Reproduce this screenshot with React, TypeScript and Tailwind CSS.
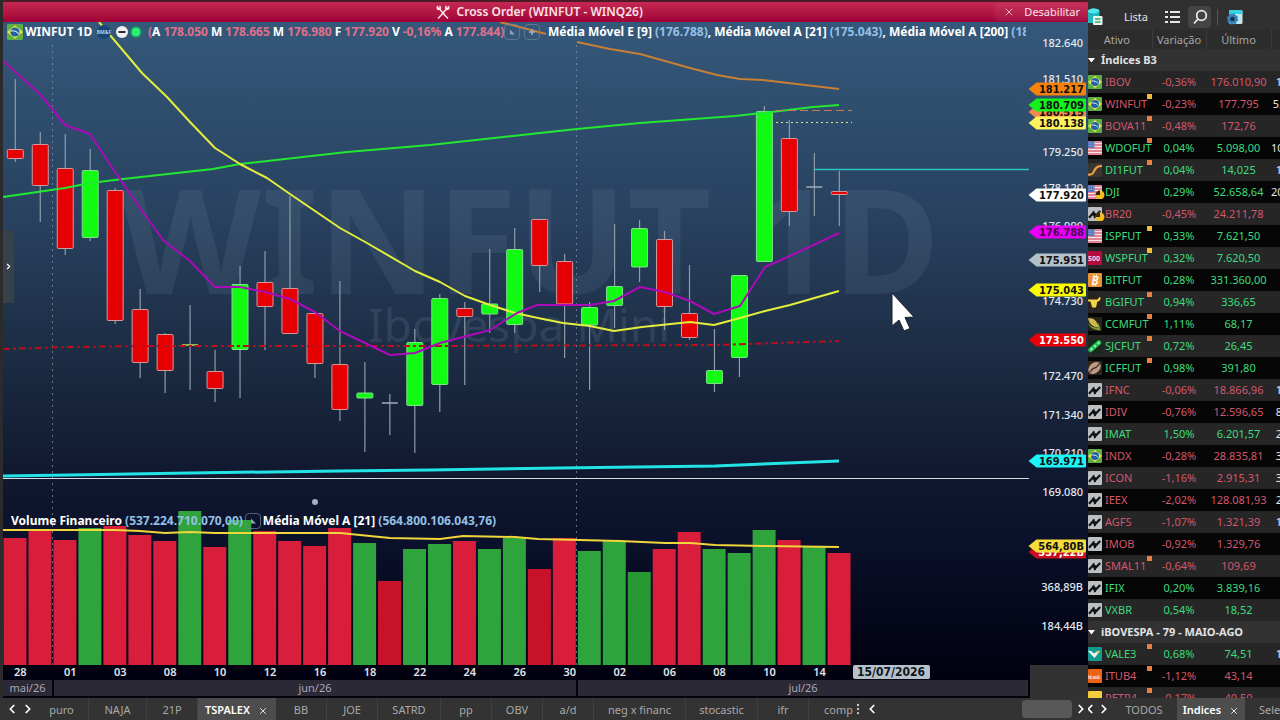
import React, { useState } from 'react';
import { ChevronLeft, ChevronRight, MoreVertical, X } from 'lucide-react';

// --- Types ---

type Color = 'up' | 'down' | 'doji';
// [bodyTop, bodyBottom, high, low, color]
type Candle = [number, number, number, number, Color];

interface Quote {
  symbol: string;
  icon: string;
  change: string;
  last: string;
  next?: string;
  dot?: 'yellow' | 'orange';
}

interface Tag {
  y: number;
  label: string;
  fill: string;
  text?: string;
}

// --- Chart data ---

const STEP = 24.97;
const candleX = (i: number) => 15.3 + i * STEP;

const CANDLES: Candle[] = [
  [149.5, 158.5, 79, 162, 'down'],
  [144.5, 185.5, 132, 222, 'down'],
  [168.5, 248.5, 134, 255, 'down'],
  [170.5, 237.5, 149, 241, 'up'],
  [190.5, 320.5, 188, 324, 'down'],
  [309.5, 362.5, 289, 378, 'down'],
  [334.5, 370.5, 333, 393, 'down'],
  [344, 346, 305, 390, 'doji'],
  [371.5, 388.5, 350, 402, 'down'],
  [284.5, 349.5, 266, 398, 'up'],
  [282.5, 306.5, 251, 350, 'down'],
  [288.5, 333.5, 196, 333, 'down'],
  [313.5, 363.5, 313, 378, 'down'],
  [364.5, 409.5, 281, 421, 'down'],
  [393, 398, 362, 452, 'up'],
  [402, 404, 394, 435, 'doji'],
  [342.5, 405.5, 329, 453, 'up'],
  [298.5, 384.5, 294, 412, 'up'],
  [308.5, 316.5, 302, 385, 'down'],
  [304, 314, 249, 333, 'up'],
  [249.5, 324.5, 228, 333, 'up'],
  [219.5, 265.5, 219, 292, 'down'],
  [261.5, 304, 254, 358, 'down'],
  [307.5, 325, 302, 390, 'up'],
  [286.5, 305.5, 224, 328, 'up'],
  [228.5, 267, 220, 282, 'up'],
  [239.5, 306.5, 231, 330, 'down'],
  [313.5, 337.5, 265, 340, 'down'],
  [370.5, 383.5, 329, 392, 'up'],
  [275.5, 357.5, 275, 377, 'up'],
  [111.5, 261.5, 106, 261, 'up'],
  [138.5, 211.5, 120, 226, 'down'],
  [186, 188, 153, 216, 'doji'],
  [191.5, 194.5, 171, 226, 'down'],
];

const VOLUMES: [number, Color][] = [
  [538, 'down'], [530, 'down'], [540, 'down'], [528, 'up'], [526, 'down'], [535, 'down'], [541, 'down'],
  [511, 'up'], [547, 'down'], [520, 'up'], [531, 'down'], [541, 'down'], [546, 'down'], [528, 'down'],
  [543, 'up'], [581, 'down'], [549, 'up'], [544, 'up'], [541, 'down'], [549, 'up'], [538, 'up'],
  [569, 'down'], [538, 'down'], [551, 'up'], [541, 'up'], [572, 'up'], [549, 'down'], [532, 'down'],
  [549, 'up'], [553, 'up'], [530, 'up'], [540, 'down'], [546, 'up'], [553, 'down'],
];

const LINES = [
  { color: '#c77f35', width: 2, points: '500,22 546,34' },
  { color: '#c77f35', width: 2, points: '577,42 610,49 640,54 665,61 690,68 717,75 740,79 763,80 839,89' },
  { color: '#22e832', width: 2, points: '3,197 65,188 90,183 123,179 213,169 240,164 347,152 430,145 513,136 540,133 577,129 640,123 735,116 780,111 813,107 839,105' },
  { color: '#22e4e6', width: 3, points: '3,476 70,475 190,473 340,471 430,470 560,468 715,466 839,461' },
  { color: '#e4ee3c', width: 2, points: '99,22 142,73 167,97 190,122 215,148 240,164 267,178 290,194 340,228 367,243 415,271 440,282 465,296 490,305 515,313 538,318 563,323 590,326 614,331 642,327 690,322 714,325 740,318 765,311 790,305 839,291' },
  { color: '#a90bb9', width: 2, points: '3,61 40,94 65,125 90,134 115,172 140,208 163,240 190,261 215,287 240,287 265,292 290,299 315,312 340,331 390,355 415,353 440,343 490,330 517,313 537,305 590,305 614,301 640,287 665,292 690,301 714,314 740,306 765,267 790,256 839,233' },
];

const VOLUME_AVERAGE = '3,530 115,530 140,531 165,533 190,532 215,533 340,533 390,538 440,539 463,536 515,537 538,539 620,541 665,543 690,543 715,545 765,546 839,547';

const PRICES = [
  { y: 43, label: '182.640' },
  { y: 79, label: '181.510' },
  { y: 152, label: '179.250' },
  { y: 188, label: '178.120' },
  { y: 226, label: '176.990' },
  { y: 301, label: '174.730' },
  { y: 376, label: '172.470' },
  { y: 415, label: '171.340' },
  { y: 453, label: '170.210' },
  { y: 492, label: '169.080' },
  { y: 587, label: '368,89B' },
  { y: 626, label: '184,44B' },
];

const TAGS: Tag[] = [
  { y: 89, label: '181.217', fill: '#f5820a' },
  { y: 112, label: '180.515', fill: '#f28a4a' },
  { y: 105, label: '180.709', fill: '#12f31c' },
  { y: 123, label: '180.138', fill: '#fdf35c' },
  { y: 195, label: '177.920', fill: '#ffffff' },
  { y: 232, label: '176.788', fill: '#e800f5', text: '#4d0055' },
  { y: 260, label: '175.951', fill: '#b4c1cb' },
  { y: 290, label: '175.043', fill: '#fbfb00' },
  { y: 340, label: '173.550', fill: '#e80008', text: '#ffffff' },
  { y: 461, label: '169.971', fill: '#1cf4f7' },
  { y: 552, label: '537,22B', fill: '#c8101e', text: '#ffffff' },
  { y: 546, label: '564,80B', fill: '#f7dc3b' },
];

const DAYS = ['28', '01', '03', '08', '10', '12', '16', '18', '22', '24', '26', '30', '02', '06', '08', '10', '14'];

// --- Watchlist data ---

const INDICES: Quote[] = [
  { symbol: 'IBOV', icon: 'br', change: '-0,36%', last: '176.010,90', next: '1' },
  { symbol: 'WINFUT', icon: 'br', change: '-0,23%', last: '177.795', next: '5.', dot: 'yellow' },
  { symbol: 'BOVA11', icon: 'br', change: '-0,48%', last: '172,76', dot: 'orange' },
  { symbol: 'WDOFUT', icon: 'us', change: '0,04%', last: '5.098,00', next: '10', dot: 'orange' },
  { symbol: 'DI1FUT', icon: 'curve', change: '0,04%', last: '14,025', next: '1', dot: 'orange' },
  { symbol: 'DJI', icon: 'us-clock', change: '0,29%', last: '52.658,64', next: '20' },
  { symbol: 'BR20', icon: 'index-clock', change: '-0,45%', last: '24.211,78' },
  { symbol: 'ISPFUT', icon: 'us', change: '0,33%', last: '7.621,50', dot: 'yellow' },
  { symbol: 'WSPFUT', icon: '500', change: '0,32%', last: '7.620,50', dot: 'yellow' },
  { symbol: 'BITFUT', icon: 'btc', change: '0,28%', last: '331.360,00' },
  { symbol: 'BGIFUT', icon: 'bull', change: '0,94%', last: '336,65', dot: 'orange' },
  { symbol: 'CCMFUT', icon: 'corn', change: '1,11%', last: '68,17', dot: 'orange' },
  { symbol: 'SJCFUT', icon: 'soy', change: '0,72%', last: '26,45', dot: 'orange' },
  { symbol: 'ICFFUT', icon: 'coffee', change: '0,98%', last: '391,80', dot: 'orange' },
  { symbol: 'IFNC', icon: 'index', change: '-0,06%', last: '18.866,96', next: '1' },
  { symbol: 'IDIV', icon: 'index', change: '-0,76%', last: '12.596,65', next: '8' },
  { symbol: 'IMAT', icon: 'index', change: '1,50%', last: '6.201,57', next: '2' },
  { symbol: 'INDX', icon: 'br', change: '-0,28%', last: '28.835,81', next: '3' },
  { symbol: 'ICON', icon: 'index', change: '-1,16%', last: '2.915,31', next: '3' },
  { symbol: 'IEEX', icon: 'index', change: '-2,02%', last: '128.081,93', next: '2' },
  { symbol: 'AGFS', icon: 'index', change: '-1,07%', last: '1.321,39', next: '1' },
  { symbol: 'IMOB', icon: 'index', change: '-0,92%', last: '1.329,76' },
  { symbol: 'SMAL11', icon: 'index', change: '-0,64%', last: '109,69', dot: 'orange' },
  { symbol: 'IFIX', icon: 'index', change: '0,20%', last: '3.839,16' },
  { symbol: 'VXBR', icon: 'index', change: '0,54%', last: '18,52' },
];

const IBOVESPA: Quote[] = [
  { symbol: 'VALE3', icon: 'vale', change: '0,68%', last: '74,51', next: '1', dot: 'orange' },
  { symbol: 'ITUB4', icon: 'itau', change: '-1,12%', last: '43,14', dot: 'orange' },
  { symbol: 'PETR4', icon: 'petr', change: '-0,17%', last: '40,50', dot: 'orange' },
];

const CHART_TABS = [
  { name: 'puro', width: 'w-[54px]' },
  { name: 'NAJA', width: 'w-[58px]' },
  { name: '21P', width: 'w-[51px]' },
  { name: 'TSPALEX', width: 'w-[78px]' },
  { name: 'BB', width: 'w-[51px]' },
  { name: 'JOE', width: 'w-[51px]' },
  { name: 'SATRD', width: 'w-[63px]' },
  { name: 'pp', width: 'w-[51px]' },
  { name: 'OBV', width: 'w-[51px]' },
  { name: 'a/d', width: 'w-[51px]' },
  { name: 'neg x financ', width: 'w-[92px]' },
  { name: 'stocastic', width: 'w-[72px]' },
  { name: 'ifr', width: 'w-[51px]' },
];

// --- Icons ---

const BrazilFlag = () => (
  <>
    <rect width="14" height="14" rx="1" fill="#5cae45" />
    <path d="M7 1 14 7 7 13 0 7Z" fill="#e9e24a" />
    <circle cx="7" cy="7" r="4" fill="#1f62a8" />
    <path d="M3.4 6.200c2.400-.8 5 .1 6.900 2.200" stroke="#dcecf4" strokeWidth="1" fill="none" />
  </>
);

const UsFlag = () => (
  <>
    <rect width="14" height="14" rx="1" fill="#f1e4ea" />
    <path d="M0 1h14M0 4h14M0 7h14M0 10h14M0 13h14" stroke="#dd6478" strokeWidth="1.400" />
    <rect width="6.500" height="7" fill="#5b78b8" />
    <path d="M1 2h5M1 4.500h5" stroke="#a9bbe0" strokeWidth=".7" strokeDasharray="1 1" />
  </>
);

const IndexMark = () => (
  <>
    <rect width="14" height="14" rx="1" fill="#bcc0c3" />
    <path d="M1 10.800 5.600 5.600 6.800 9.600 12.200 4" stroke="#101214" strokeWidth="2.200" fill="none" />
    <path d="M5.200 4.500v4.500M7.300 6v5" stroke="#101214" strokeWidth="1" />
  </>
);

const ClockBadge = () => (
  <>
    <circle cx="12" cy="10" r="4.500" fill="#f3bd24" />
    <path d="M12 10V5.500a4.500 4.500 0 0 0-4.500 4.500Z" fill="#2b2618" />
  </>
);

const AssetIcon: React.FC<{ name: string }> = ({ name }) => (
  <svg viewBox="0 0 17 14" className="h-[14px] w-[17px] shrink-0" aria-hidden="true">
    {name === 'br' && <BrazilFlag />}
    {name.startsWith('us') && <UsFlag />}
    {name.startsWith('index') && <IndexMark />}
    {name.endsWith('clock') && <ClockBadge />}
    {name === 'curve' && (
      <>
        <rect width="14" height="14" rx="1" fill="#3b3632" />
        <path d="M0 11.500c6 .5 5-2.500 7-5s3-3.500 7-3.500" stroke="#f0a040" strokeWidth="2.200" fill="none" />
      </>
    )}
    {name === '500' && (
      <>
        <rect width="14" height="14" rx="1" fill="#b50c3c" />
        <text x="6" y="9.500" fontSize="7" fontWeight="bold" fill="#f6dbe2" textAnchor="middle">500</text>
      </>
    )}
    {name === 'btc' && (
      <>
        <rect width="14" height="14" rx="1" fill="#e8923a" />
        <text x="7" y="11.500" fontSize="12" fontWeight="bold" fontStyle="italic" fill="#fff4e4" textAnchor="middle">B</text>
        <path d="M6 1.500v2M8.500 1.500v2M5 11v2M7.500 11v2" stroke="#fff4e4" strokeWidth="1" />
      </>
    )}
    {name === 'bull' && (
      <>
        <rect width="14" height="14" rx="1" fill="#28241c" />
        <path d="M0 4.500h9.500L11.500 2l1 .300c.3 2.700-.7 4-3.200 4.500L8 12.500H4.200L2.500 6.800 0 6.300Z" fill="#f6d34a" />
      </>
    )}
    {name === 'corn' && (
      <>
        <rect width="14" height="14" rx="1" fill="#23251a" />
        <path d="M0 1.500c5-1 9 2 10.500 8.500C5 10.500 1.500 7 0 1.500Z" fill="#d9c55a" />
        <path d="m1 2.500 8 7M3.500 2.500l6 5M1 5l6 5" stroke="#8b7a30" strokeWidth=".8" strokeDasharray="1 1" />
        <path d="M0 6c2 5 6 7 12.500 7.500C12 10 11.500 8 9.500 5c.3 2.800.3 4 .5 5.500C6 11 3 9.500 0 6Z" fill="#7c9a3c" />
      </>
    )}
    {name === 'soy' && (
      <>
        <rect width="14" height="14" rx="1" fill="#152b1b" />
        <path d="m2.500 11 8.500-7.500" stroke="#20b552" strokeWidth="4.500" strokeLinecap="round" />
        <circle cx="3.500" cy="10" r="1.500" fill="#7df0a0" />
        <circle cx="7" cy="7" r="1.500" fill="#7df0a0" />
        <circle cx="10.500" cy="4" r="1.500" fill="#7df0a0" />
      </>
    )}
    {name === 'coffee' && (
      <>
        <rect width="14" height="14" rx="1" fill="#30251f" />
        <ellipse cx="6.500" cy="7" rx="7" ry="5" transform="rotate(-42 6.500 7)" fill="#bf9a84" />
        <path d="M1.500 11.500C4 9 4 7.500 6.500 7S9.500 5 11.500 2.500" stroke="#4d3428" strokeWidth="1.300" fill="none" />
      </>
    )}
    {name === 'vale' && (
      <>
        <rect width="14" height="14" rx="1" fill="#159a91" />
        <path d="M0 4c3-1 4.500 1.500 6 2.500C8 5 9 3.500 12 4L6.500 11Z" fill="#f2faf3" />
        <path d="M8 5.500C9 4.500 10 3.500 12 4L9.500 7.200Z" fill="#e8cf5b" />
      </>
    )}
    {name === 'itau' && (
      <>
        <rect width="14" height="14" rx="1" fill="#ec6413" />
        <text x="6" y="9.500" fontSize="6" fontWeight="bold" fill="#ffe9d6" textAnchor="middle">itaú</text>
      </>
    )}
    {name === 'petr' && (
      <>
        <rect width="14" height="14" rx="1" fill="#f2cd3d" />
        <path d="M1 9h12" stroke="#fff" strokeWidth="4" />
        <path d="M2 9h10" stroke="#3c8a55" strokeWidth="2" strokeDasharray="2 1" />
      </>
    )}
  </svg>
);

const CrossedTools = () => (
  <svg viewBox="0 0 14 14" className="h-[14px] w-[14px]" aria-hidden="true" fill="none" stroke="#fbe3ea" strokeWidth="1.500">
    <path d="M2 13.500 7 8.300l5 5.200M3.500 4 8.500 9.500M10.500 4 5.500 9.500" />
    <circle cx="2.800" cy="2.800" r="2.400" fill="#fbe3ea" stroke="none" />
    <circle cx="11.200" cy="2.800" r="2.400" fill="#fbe3ea" stroke="none" />
    <path d="M2.800 0v2.400M11.200 0v2.400" stroke="#bb2450" strokeWidth="1.200" />
  </svg>
);

const LegendButton: React.FC<{ label: string; plus?: boolean }> = ({ label, plus }) => (
  <button aria-label={label} className="flex h-[16px] w-[16px] shrink-0 items-center justify-center rounded border border-[#71859c]/70">
    <svg viewBox="0 0 8 8" className="h-2 w-2" aria-hidden="true">
      {plus ? <path d="M4 1v6M1 4h6" stroke="#a3b3c4" strokeWidth="1.500" /> : <path d="M2 1.500v5h5Z" fill="#8fa2b6" />}
    </svg>
  </button>
);

// --- Chart ---

const PriceTag: React.FC<Tag> = ({ y, label, fill, text = '#101010' }) => (
  <g>
    <path d={`M1028.500 ${y}l8-6.500h48.500a1 1 0 0 1 1 1v11a1 1 0 0 1-1 1h-48.500Z`} fill={fill} />
    <text x="1084" y={y + 4} textAnchor="end" fontSize="11" fontWeight="bold" fill={text} fontFamily="'DejaVu Sans Condensed', 'DejaVu Sans', sans-serif">{label}</text>
  </g>
);

const CandleShape: React.FC<{ candle: Candle; x: number }> = ({ candle, x }) => {
  const [top, bottom, high, low, color] = candle;
  return (
    <g>
      <path d={`M${x} ${high}V${low}`} stroke="#8f9ca9" strokeWidth="1.200" />
      {color === 'doji' ? (
        <path d={`M${x - 8} ${(top + bottom) / 2}h16`} stroke="#a3adb6" strokeWidth="1.500" />
      ) : (
        <rect
          x={x - 8}
          y={top}
          width="16"
          height={bottom - top}
          rx="1"
          fill={color === 'up' ? '#12fb12' : '#e60004'}
          stroke={color === 'up' ? '#7fe08a' : '#cf9a9e'}
          strokeWidth="1"
        />
      )}
    </g>
  );
};

const volumeFill = (top: number, color: Color) => {
  if (top > 565) return color === 'up' ? '#269934' : '#c8122c';
  return color === 'up' ? '#2fa33c' : '#d81e3b';
};

const PriceChart = () => (
  <svg
    viewBox="3 22 1085 658"
    preserveAspectRatio="none"
    className="block h-full w-full"
    role="img"
    aria-label="WINFUT 1D"
    fontFamily="'Noto Sans', sans-serif"
  >
    <defs>
      <linearGradient id="sky" x1="0" y1="0" x2="0" y2="1">
        <stop offset="0" stopColor="#35587a" />
        <stop offset="0.3" stopColor="#28415f" />
        <stop offset="0.52" stopColor="#1b2b42" />
        <stop offset="0.7" stopColor="#10172f" />
        <stop offset="0.8" stopColor="#0a1029" />
        <stop offset="1" stopColor="#00000f" />
      </linearGradient>
    </defs>
    <rect x="3" y="22" width="1085" height="658" fill="url(#sky)" />

    <text x="120" y="294" fontSize="146" fontWeight="bold" fill="#8fa5b8" fillOpacity="0.12">WINFUT 1D</text>
    <text x="368" y="342" fontSize="46" fill="#8fa5b8" fillOpacity="0.17">Ibovespa Mini</text>

    {VOLUMES.map(([top, color], i) => (
      <rect key={i} x={3.5 + i * STEP} y={top} width="23" height={665 - top} fill={volumeFill(top, color)} />
    ))}
    <path d="M52.500 45V665M576.500 45V665" stroke="#8494a8" strokeOpacity="0.7" strokeDasharray="2 4" />

    {CANDLES.map((candle, i) => (
      <CandleShape key={i} candle={candle} x={candleX(i)} />
    ))}
    <path d="M182 345H198" stroke="#a8b83c" strokeWidth="1.500" />
    <path d="M3 349 70 347 140 346 430 346 715 345 839 341" stroke="#bd0a1c" strokeWidth="2" strokeDasharray="7 3 3 3" fill="none" />
    {LINES.map((line) => (
      <polyline key={line.points} points={line.points} stroke={line.color} strokeWidth={line.width} strokeLinejoin="round" fill="none" />
    ))}
    <polyline points={VOLUME_AVERAGE} stroke="#f0d63a" strokeWidth="2" fill="none" />
    <path d="M3 478.500H1029" stroke="#d5d9e0" strokeWidth="1" />
    <path d="M776 110.500H852" stroke="#c9795a" strokeDasharray="8 4" />
    <path d="M776 122.500H852" stroke="#e6e29a" strokeWidth="1.200" strokeDasharray="2 3" />
    <path d="M814 169.500H1029" stroke="#2cc3c1" strokeWidth="1.300" />
    <circle cx="315" cy="502" r="3" fill="#a9aec4" />

    {PRICES.map(({ y, label }) => (
      <text key={label} x="1083" y={y + 4} textAnchor="end" fontSize="11" fontWeight="500" fill="#e4e9ef">{label}</text>
    ))}
    {TAGS.map((tag) => (
      <PriceTag key={tag.label} {...tag} />
    ))}

    {DAYS.map((day, i) => (
      <text key={i} x={20.3 + i * 49.95} y="676" textAnchor="middle" fontSize="11" fontWeight="600" fill="#e3e6ee">{day}</text>
    ))}
    <rect x="853" y="665" width="77" height="14" rx="2" fill="#b4c1cb" />
    <text x="891" y="676" textAnchor="middle" fontSize="12" fontWeight="bold" fill="#10151c" fontFamily="'DejaVu Sans Condensed', 'DejaVu Sans', sans-serif">15/07/2026</text>
    <rect x="1030" y="665" width="58" height="15" fill="#323232" />

    {/* mouse pointer */}
    <path d="M892 293v33l7-6 5 11 6-2.500-5-11 9-.5Z" fill="#ffffff" stroke="#1a1f2b" strokeWidth="1" strokeLinejoin="round" />
  </svg>
);

const Value: React.FC<{ children: React.ReactNode; tone?: 'red' | 'blue' }> = ({ children, tone = 'blue' }) => (
  <span className={tone === 'red' ? 'text-[#e0708a]' : 'text-[#93c0e6]'}>{children}</span>
);

const ChartLegend = () => (
  <div className="absolute top-[2px] left-1 flex h-[16px] w-[1019px] items-center overflow-hidden text-[12px] font-bold whitespace-nowrap text-white">
    <svg viewBox="0 0 14 14" className="h-4 w-4 shrink-0" aria-hidden="true"><BrazilFlag /></svg>
    <span className="ml-[2px] w-[72px] shrink-0">WINFUT 1D</span>
    <svg viewBox="0 0 46 16" className="h-4 w-[46px] shrink-0" aria-hidden="true">
      <circle cx="7" cy="8" r="7" fill="#174674" />
      <text x="7" y="10" fontSize="5" fontWeight="bold" fill="#a8d3ea" textAnchor="middle">BM&F</text>
      <circle cx="25" cy="8" r="6" fill="#f0f0f0" />
      <path d="M21.500 8h7" stroke="#2b2b2b" strokeWidth="2" />
      <circle cx="39" cy="8" r="6.500" fill="#1b8a5c" fillOpacity="0.7" />
      <circle cx="39" cy="8" r="4.500" fill="#2bee78" />
    </svg>
    <span className="ml-[5px] flex w-[356px] shrink-0 gap-[3px]">
      <span><Value tone="red">(</Value>A</span>
      <Value tone="red">178.050</Value>
      <span>M</span>
      <Value tone="red">178.665</Value>
      <span>M</span>
      <Value tone="red">176.980</Value>
      <span>F</span>
      <Value tone="red">177.920</Value>
      <span>V</span>
      <Value tone="red">-0,16%</Value>
      <span>A</span>
      <Value tone="red">177.844)</Value>
    </span>
    <LegendButton label="Configurar" />
    <span className="ml-1"><LegendButton label="Adicionar" plus /></span>
    <span className="ml-2">
      Média Móvel E [9] <Value>(176.788)</Value>, Média Móvel A [21] <Value>(175.043)</Value>, Média Móvel A [200] <Value>(180.709)</Value>
    </span>
  </div>
);

const VolumeLegend = () => (
  <div className="absolute top-[491px] left-2 flex items-center text-[12px] leading-4 font-bold whitespace-nowrap text-white">
    <span className="mr-[2px]">
      Volume Financeiro <Value>(537.224.710.070,00)</Value>
    </span>
    <LegendButton label="Configurar volume" />
    <span className="ml-[2px]">
      Média Móvel A [21] <Value>(564.800.106.043,76)</Value>
    </span>
  </div>
);

const ChartPanel = () => {
  const [activeTab, setActiveTab] = useState('TSPALEX');

  return (
    <main className="flex min-w-0 flex-1 flex-col">
      <header className="ml-[3px] flex h-[22px] items-center border-t-2 border-[#4b1c28] bg-linear-to-b from-[#c42752] to-[#a10036] text-[#fbe3ea]">
        <h1 className="flex flex-1 items-center justify-center gap-[7px] pl-[80px] text-[12px] font-semibold">
          <CrossedTools />
          Cross Order (WINFUT - WINQ26)
        </h1>
        <button className="flex h-[18px] items-center gap-[9px] rounded-sm bg-white/5 px-2 text-[11px]">
          <X className="h-3 w-3" strokeWidth={1.5} />
          Desabilitar
        </button>
      </header>

      <section className="relative ml-[3px] min-h-0 flex-1">
        <PriceChart />
        <ChartLegend />
        <VolumeLegend />
        <button aria-label="Expandir" className="absolute top-[208px] left-0 flex h-[73px] w-[11px] items-center justify-center bg-[#3b4148]/90 text-white">
          <ChevronRight className="h-[9px] w-[9px]" strokeWidth={3} />
        </button>
      </section>

      <div className="ml-[3px] flex h-[18px] gap-[2px] bg-[#03030e] pb-[2px] text-[11px] leading-[15px] text-[#a8a8b4]">
        <div className="w-[49px] bg-[#2b2935] text-center">mai/26</div>
        <div className="w-[522px] bg-[#2b2935] text-center">jun/26</div>
        <div className="flex-1 bg-[#2b2935] text-center">jul/26</div>
        <div className="-mb-[2px] w-[58px] bg-[#323232]" />
      </div>

      <nav className="flex h-[22px] items-center bg-[#333333] text-[11px] text-[#a9a9a9]">
        <button aria-label="Anterior" className="ml-[5px]"><ChevronLeft className="h-[14px] w-[14px] text-white" strokeWidth={3} /></button>
        <button aria-label="Próximo" className="ml-[2px]"><ChevronRight className="h-[14px] w-[14px] text-white" strokeWidth={3} /></button>
        {CHART_TABS.map(({ name, width }) => (
          <button
            key={name}
            onClick={() => setActiveTab(name)}
            className={`${width} flex h-full shrink-0 items-center justify-center gap-2 border-r pt-[3px] whitespace-nowrap ${
              activeTab === name ? 'border-transparent bg-[#4d4d4d] font-semibold text-white' : 'border-[#404040]'
            }`}
          >
            {name}
            {activeTab === name && <X className="h-[10px] w-[10px] shrink-0" />}
          </button>
        ))}
        <button className="ml-[15px] h-full shrink-0 pt-[3px]">comp</button>
        <MoreVertical className="-ml-[2px] h-[14px] w-[14px] shrink-0 text-[#cccccc]" />
        <button aria-label="Rolar para a esquerda"><ChevronLeft className="h-[14px] w-[14px] text-white" strokeWidth={3} /></button>
        <div className="flex flex-1 justify-end">
          <div className="h-[18px] w-[50px] rounded bg-[#585858]" />
        </div>
        <button aria-label="Rolar para a direita" className="ml-[2px]"><ChevronRight className="h-[14px] w-[14px] text-white" strokeWidth={3} /></button>
      </nav>
    </main>
  );
};

// --- Watchlist ---

const QuoteRow: React.FC<{ quote: Quote; dark: boolean }> = ({ quote, dark }) => {
  const tone = quote.change.startsWith('-') ? 'text-[#d4566e]' : 'text-[#3ddc7c]';
  return (
    <tr className={`h-[22px] ${dark ? 'bg-[#060606]' : 'bg-[#262626]'} ${tone}`}>
      <td className="relative">
        <div className="flex items-center">
          <AssetIcon name={quote.icon} />
          {quote.symbol}
        </div>
        {quote.dot && (
          <span className={`absolute top-[1px] right-0 h-[5px] w-[5px] ${quote.dot === 'yellow' ? 'bg-[#f0bd36]' : 'bg-[#e8813f]'}`} />
        )}
      </td>
      <td className="text-center">{quote.change}</td>
      <td className="text-center">{quote.last}</td>
      <td className="text-right text-[#e6e6e6]">{quote.next}</td>
    </tr>
  );
};

const GroupRow: React.FC<{ title: string }> = ({ title }) => (
  <tr className="h-[22px] bg-[#323232]">
    <th colSpan={4} className="text-left text-[11px] font-bold text-[#e2e2e2]">
      <button className="flex items-center gap-[5px]">
        <svg viewBox="0 0 8 5" className="h-[5px] w-2" aria-hidden="true"><path d="M0 0h7L3.500 4.500Z" fill="#ffffff" /></svg>
        {title}
      </button>
    </th>
  </tr>
);

const Watchlist = () => (
  <aside className="flex w-[192px] shrink-0 flex-col overflow-hidden bg-[#262626] text-[11px] text-[#e2e2e2]">
    <div className="flex h-[30px] shrink-0 items-center bg-[#303030] pt-1">
      <svg viewBox="0 0 16 18" className="h-[18px] w-4" aria-hidden="true">
        <path d="M0 2.500C3-.5 11 0 11.500 3v12H0Z" fill="#21b7c1" />
        <path d="M0 2.500C3-.5 11 0 11.500 3 9 6 3 6 0 4Z" fill="#4fe8ec" />
        <rect x="5" y="8" width="9.500" height="9" rx="1" fill="#e8f6ee" />
        <path d="M7 11h5.500M7 14h5.500" stroke="#35a06b" strokeWidth="1.500" />
      </svg>
      <button className="ml-[20px]">Lista</button>
      <button aria-label="Exibir lista" className="ml-4">
        <svg viewBox="0 0 17 16" className="h-4 w-[17px]" aria-hidden="true" stroke="#e8e8e8" strokeWidth="2">
          <path d="M1 3h3M1 8h3M1 13h3M6 3h10M6 8h10M6 13h10" />
        </svg>
      </button>
      <button aria-label="Buscar" className="ml-[7px] flex h-[22px] w-[23px] items-center justify-center rounded-sm bg-[#444444]">
        <svg viewBox="0 0 16 16" className="h-4 w-4" aria-hidden="true" fill="none" stroke="#e8e8e8" strokeWidth="1.800">
          <circle cx="9.500" cy="6.500" r="4.800" />
          <path d="M6 10 2 14.500" />
        </svg>
      </button>
      <span className="ml-[6px] h-4 w-px bg-[#555555]" />
      <button aria-label="Configurações" className="ml-[9px]">
        <svg viewBox="0 0 16 16" className="h-4 w-4" aria-hidden="true">
          <rect x="2" y="1" width="13.500" height="14" rx="1.500" fill="#c3e6ea" />
          <path d="M2 5V2.500A1.500 1.500 0 0 1 3.500 1H14a1.500 1.500 0 0 1 1.500 1.500V5Z" fill="#35d5e0" />
          <circle cx="5.500" cy="10" r="5" fill="#3184bb" />
          <circle cx="5.500" cy="10" r="5" fill="none" stroke="#3184bb" strokeWidth="1.600" strokeDasharray="2 1.900" />
          <circle cx="5.500" cy="10" r="2.200" fill="#22303c" />
        </svg>
      </button>
    </div>

    <div className="min-h-0 flex-1 overflow-hidden">
      <table className="w-[194px] table-fixed border-collapse leading-4 whitespace-nowrap">
        <colgroup>
          <col className="w-[64px]" />
          <col className="w-[54px]" />
          <col />
          <col className="w-[11px]" />
        </colgroup>
        <thead>
          <tr className="h-[19px] bg-[#2c2c2c] text-[#a6a6a6]">
            <th className="border-r border-[#3c3c3c] pr-[6px] font-normal">Ativo</th>
            <th className="border-r border-[#3c3c3c] font-normal">Variação</th>
            <th className="border-r border-[#3c3c3c] font-normal">Último</th>
            <th />
          </tr>
        </thead>
        <tbody>
          <GroupRow title="Índices B3" />
          {INDICES.map((quote, i) => (
            <QuoteRow key={quote.symbol} quote={quote} dark={i % 2 === 1} />
          ))}
          <GroupRow title="iBOVESPA - 79 - MAIO-AGO" />
          {IBOVESPA.map((quote, i) => (
            <QuoteRow key={quote.symbol} quote={quote} dark={i % 2 === 1} />
          ))}
        </tbody>
      </table>
    </div>

    <nav className="flex h-[22px] shrink-0 items-center bg-[#333333] whitespace-nowrap text-[#a9a9a9]">
      <button aria-label="Lista anterior" className="-ml-[5px] shrink-0"><ChevronLeft className="h-[14px] w-[14px] text-white" strokeWidth={3} /></button>
      <button aria-label="Próxima lista" className="shrink-0"><ChevronRight className="h-[14px] w-[14px] text-white" strokeWidth={3} /></button>
      <button className="h-full w-[66px] shrink-0 pt-[3px]">TODOS</button>
      <button className="flex h-full w-[68px] shrink-0 items-center justify-center gap-2 bg-[#4d4d4d] pt-[3px] font-semibold text-white">
        Indices
        <X className="h-[10px] w-[10px] shrink-0" />
      </button>
      <button className="ml-[14px] h-full shrink-0 pt-[3px]">Selecionados</button>
    </nav>
  </aside>
);

const App: React.FC = () => (
  <div className="flex h-screen overflow-hidden bg-[#2b2b2b] font-['Noto_Sans',sans-serif]">
    <ChartPanel />
    <Watchlist />
  </div>
);

export default App;
